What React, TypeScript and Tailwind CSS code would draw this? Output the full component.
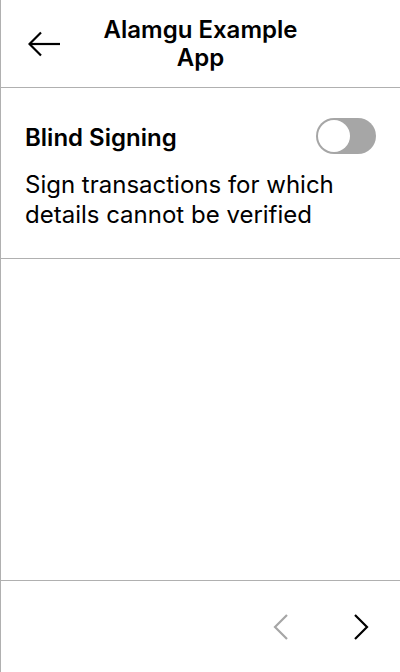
import React, { FC, useState } from 'react';

const BackArrow: FC = () => (
  <svg width="32" height="26" viewBox="0 0 32 26" fill="none" stroke="#000" strokeWidth="2.2">
    <path d="M1.5 13H32" />
    <path d="M13 1.5L1.5 13L13 24.5" />
  </svg>
);

const Chevron: FC<{ dir: 'left' | 'right'; color: string }> = ({ dir, color }) => (
  <svg width="16" height="26" viewBox="0 0 16 26" fill="none" stroke={color} strokeWidth="2.2">
    {dir === 'left' ? <path d="M14 1L2 13L14 25" /> : <path d="M2 1L14 13L2 25" />}
  </svg>
);

const Toggle: FC<{ on: boolean; onClick: () => void }> = ({ on, onClick }) => (
  <button
    onClick={onClick}
    className={`flex h-[36px] w-[60px] items-center rounded-full bg-[#a6a6a6] p-[2px] ${
      on ? 'justify-end' : 'justify-start'
    }`}
  >
    <span className="block h-[32px] w-[32px] rounded-full bg-white" />
  </button>
);

const App: FC = () => {
  const [blindSigning, setBlindSigning] = useState(false);

  return (
    <div className="flex h-[672px] w-[400px] flex-col border-l border-[#b0b0b0] bg-white font-['Inter',sans-serif] text-black">
      <div className="flex h-[88px] items-center border-b border-[#b0b0b0]">
        <div className="flex w-[80px] pl-[27px]">
          <BackArrow />
        </div>
        <div className="flex-1 text-center">
          <div className="mx-auto max-w-[220px] text-[24px] font-semibold leading-[28px]">
            Alamgu Example App
          </div>
        </div>
        <div className="w-[80px]" />
      </div>

      <div className="border-b border-[#b0b0b0] px-6 pt-[30px] pb-[28px]">
        <div className="flex items-start justify-between">
          <span className="mt-[6px] text-[24px] font-semibold leading-[28px]">Blind Signing</span>
          <Toggle on={blindSigning} onClick={() => setBlindSigning(!blindSigning)} />
        </div>
        <p className="mt-[16px] text-[24px] leading-[30px]">
          Sign transactions for which details cannot be verified
        </p>
      </div>

      <div className="flex-1" />

      <div className="flex h-[92px] items-center justify-end gap-[64px] border-t border-[#b0b0b0] pr-[31px]">
        <Chevron dir="left" color="#a6a6a6" />
        <Chevron dir="right" color="#000" />
      </div>
    </div>
  );
};

export default App;
